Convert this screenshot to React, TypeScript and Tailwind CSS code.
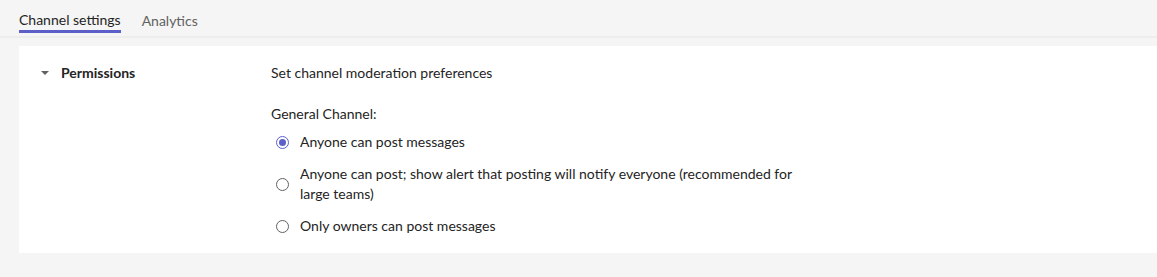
import { useState } from "react";

const options = [
  "Anyone can post messages",
  "Anyone can post; show alert that posting will notify everyone (recommended for large teams)",
  "Only owners can post messages",
];

function Radio({ checked }: { checked: boolean }) {
  return (
    <span
      className={
        checked
          ? "flex h-[13px] w-[13px] shrink-0 items-center justify-center rounded-full border border-[#5b5fc7]"
          : "flex h-[13px] w-[13px] shrink-0 items-center justify-center rounded-full border border-[#616161]"
      }
    >
      {checked && <span className="h-[7px] w-[7px] rounded-full bg-[#5b5fc7]" />}
    </span>
  );
}

export default function App() {
  const [selected, setSelected] = useState(0);

  return (
    <div className="h-[277px] w-full overflow-hidden bg-[#f5f5f5] font-['Lato','Segoe_UI',sans-serif] text-[14px] text-[#242424]">
      {/* Tabs */}
      <div className="flex h-[38px] gap-[21px] border-b-2 border-[#ededed] pl-[19px]">
        <div className="flex flex-col pt-[10px]">
          <span className="leading-5">Channel settings</span>
          <span className="mt-[0px] h-[3px] w-full bg-[#5b5fc7]" />
        </div>
        <div className="pt-[10px]">
          <span className="leading-5 text-[#616161]">Analytics</span>
        </div>
      </div>

      {/* Card */}
      <div className="ml-[19px] mt-[8px] flex h-[207px] bg-white pt-[17px]">
        <div className="flex h-5 w-[252px] shrink-0 items-center gap-[12px] pl-[22px]">
          <svg width="8" height="4" viewBox="0 0 8 4" className="fill-[#616161]">
            <path d="M0 0h8L4 4z" />
          </svg>
          <span className="font-bold leading-5">Permissions</span>
        </div>
        <div className="flex flex-col">
          <p className="leading-5">Set channel moderation preferences</p>
          <p className="mt-[21px] leading-5">General Channel:</p>
          <div className="mt-[8px] flex flex-col gap-[12px]">
            {options.map((label, i) => (
              <label
                key={label}
                onClick={() => setSelected(i)}
                className="flex cursor-pointer items-center gap-[11px] pl-[5px]"
              >
                <Radio checked={selected === i} />
                <span className="max-w-[510px] leading-5">{label}</span>
              </label>
            ))}
          </div>
        </div>
      </div>
    </div>
  );
}
